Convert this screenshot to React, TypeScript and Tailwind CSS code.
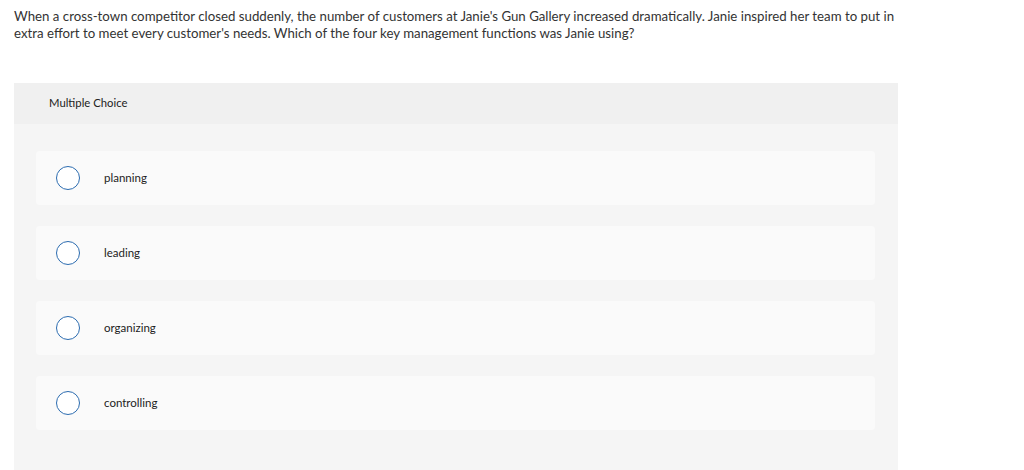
const options = ['planning', 'leading', 'organizing', 'controlling'];

export default function App() {
  return (
    <div
      className="min-h-[470px] bg-white text-[#222]"
      style={{ fontFamily: 'Lato, "Open Sans", "Liberation Sans", sans-serif' }}
    >
      <div className="px-[14px] pt-[8px]">
        <p className="w-[895px] text-[13.25px] leading-[17px] text-[#333]">
          When a cross-town competitor closed suddenly, the number of customers at Janie's Gun Gallery increased
          dramatically. Janie inspired her team to put in extra effort to meet every customer's needs. Which of the
          four key management functions was Janie using?
        </p>

        <div className="mt-[41px] w-[884px] bg-[#f5f5f5] pb-[40px]">
          {/* Header */}
          <div className="flex h-[41px] items-center bg-[#f0f0f0] pl-[35px] text-[11.3px] text-[#222]">
            Multiple Choice
          </div>

          {/* Options */}
          <div className="flex flex-col gap-[21px] px-[22px] pr-[23px] pt-[27px]">
            {options.map((o) => (
              <div key={o} className="flex h-[54px] items-center rounded-[4px] bg-[#fafafa] pl-[20px]">
                <span className="h-6 w-6 rounded-full border border-[#2c6cb0] bg-white" />
                <span className="ml-[24px] text-[11.5px] text-[#222]">{o}</span>
              </div>
            ))}
          </div>
        </div>
      </div>
    </div>
  );
}
